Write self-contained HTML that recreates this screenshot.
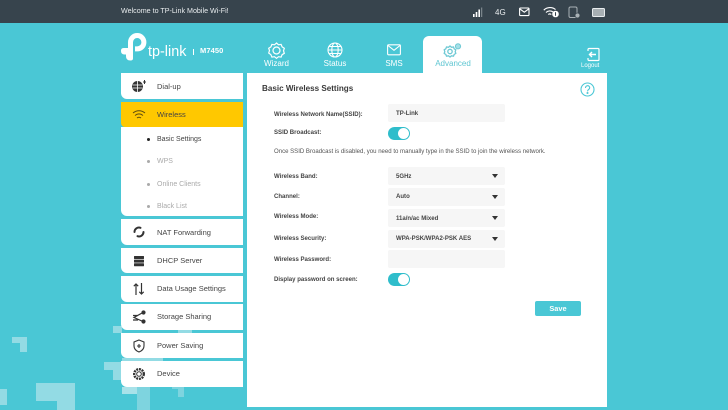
<!DOCTYPE html>
<html><head><meta charset="utf-8"><style>
*{box-sizing:border-box}
html,body{margin:0;padding:0}
body{width:728px;height:410px;overflow:hidden;background:#4AC7D5;position:relative;font-family:"Liberation Sans",sans-serif;color:#333}
.a{position:absolute}
.t{position:absolute;white-space:nowrap;line-height:12px}
.deco{position:absolute;background:#93DBE4}
.mi{position:absolute;left:121px;width:122px;background:#fff;border-radius:0 0 0 6px;font-size:7.5px;color:#444}
.mi span{position:absolute;left:36px;top:50%;margin-top:-6px;line-height:12px;white-space:nowrap}
.mi svg{position:absolute;left:10px;top:50%;margin-top:-7px}
.sub{position:absolute;font-size:7px;left:157px;line-height:10px;color:#aaa;white-space:nowrap}
.dot{position:absolute;left:146.5px;width:3px;height:3px;border-radius:50%;background:#aaa}
.l{position:absolute;left:274px;font-size:6.05px;font-weight:bold;color:#444;line-height:10px;white-space:nowrap}
.f{position:absolute;left:388px;width:117px;height:18px;background:#f6f6f6;border-radius:2px;font-size:6.05px;font-weight:bold;color:#444;line-height:19px;padding-left:8px}
.f i{position:absolute;right:7px;top:7px;width:0;height:0;border-left:3px solid transparent;border-right:3px solid transparent;border-top:4px solid #333}
.tog{position:absolute;left:388px;width:21.500px;height:13px;border-radius:6.500px;background:#2FBDCB}
.tog b{position:absolute;right:1px;top:1px;width:11px;height:11px;border-radius:50%;background:#fff}
.tab{position:absolute;top:58px;font-size:8px;color:#fff;line-height:12px;text-align:center;white-space:nowrap}
</style></head><body>
<div class="a" style="left:0;top:0;width:728px;height:23px;background:#37444D"></div>
<div class="t" style="left:121px;top:5px;font-size:7.15px;color:#e8ecee">Welcome to TP-Link Mobile Wi-Fi!</div>
<svg class="a" style="left:472px;top:7px" width="12" height="11" fill="#fff"><rect x="1" y="7" width="1.600" height="3"/><rect x="3.700" y="5" width="1.600" height="5"/><rect x="6.400" y="2.500" width="1.600" height="7.500"/><rect x="9.200" y=".5" width="1" height="9.500" fill="#8b959b"/></svg>
<div class="t" style="left:495px;top:6.500px;font-size:8px;color:#e8ecee">4G</div>
<svg class="a" style="left:519px;top:7px" width="11" height="10" fill="none" stroke="#fff" stroke-width="1.100"><rect x=".6" y="1" width="9.400" height="7.600" rx=".8"/><path d="M1 2l4.300 3.200L9.600 2"/></svg>
<svg class="a" style="left:543px;top:6px" width="17" height="12" fill="none" stroke="#fff" stroke-width="1.200"><path d="M.8 4.200C4 .8 9.500.8 12.500 3.600M3 6.500c2-2 5-2 7-.6M5.300 8.500c1-.8 2-.8 3 0"/><circle cx="12.500" cy="8" r="3.300" fill="#fff" stroke="none"/><rect x="12" y="6.200" width="1" height="3.600" fill="#37444D" stroke="none"/></svg>
<svg class="a" style="left:568px;top:6px" width="13" height="13" fill="none" stroke="#aab2b6" stroke-width="1"><rect x="1" y="1" width="8" height="10.500" rx="1.500"/><circle cx="9.500" cy="9.500" r="2.500" fill="#aab2b6" stroke="#37444D" stroke-width=".8"/></svg>
<svg class="a" style="left:592px;top:8px" width="13" height="9"><rect x=".5" y=".5" width="12" height="8" rx="1" fill="#a8b0b4" stroke="#e8ecee" stroke-width="1"/></svg>

<!-- logo -->
<svg class="a" style="left:120px;top:32px" width="28" height="30" fill="#fff"><path d="M10.500 16V10.200A6.700 6.700 0 1 1 17.200 16.900H15" fill="none" stroke="#fff" stroke-width="5"/><path d="M4 16H13V26.500Q13 28.500 10.500 28.500Q6 28.500 6 24V22.500H4.500Q1 22.500 1 19V18.500Q1 16 4 16Z"/></svg>
<div class="t" style="left:148px;top:44px;font-size:14.400px;color:#fff;line-height:16px">tp-link</div>
<div class="a" style="left:192.500px;top:49px;width:1px;height:6px;background:#fff"></div>
<div class="t" style="left:200px;top:45px;font-size:7.500px;font-weight:bold;color:#fff;letter-spacing:.1px">M7450</div>

<!-- nav -->
<svg class="a" style="left:268px;top:42px" width="17" height="17" fill="none" stroke="#fff" stroke-width="1.200"><path d="M8.500 1l2 1.800 2.600-.4 1 2.500 2.200 1.400-.8 2.500.8 2.500-2.200 1.400-1 2.400-2.600-.4-2 1.600-2-1.600-2.600.4-1-2.400L.7 11l.8-2.500L.7 6.300 2.900 4.900l1-2.500 2.600.4z"/><circle cx="8.500" cy="8.500" r="3.500"/></svg>
<div class="tab" style="left:264px;width:25px">Wizard</div>
<svg class="a" style="left:327px;top:42px" width="16" height="16" fill="none" stroke="#fff" stroke-width="1.100"><circle cx="8" cy="8" r="7"/><ellipse cx="8" cy="8" rx="3.200" ry="7"/><path d="M1 8h14M2 4.500h12M2 11.500h12"/></svg>
<div class="tab" style="left:323px;width:24px">Status</div>
<svg class="a" style="left:387px;top:44px" width="14" height="12" fill="none" stroke="#fff" stroke-width="1.100"><rect x=".6" y=".8" width="12.800" height="10" rx="1"/><path d="M1 1.500l6 4.800 6-4.800"/></svg>
<div class="tab" style="left:385px;width:18px">SMS</div>
<div class="a" style="left:423px;top:36px;width:59px;height:38px;background:#fff;border-radius:6px 6px 0 0"></div>
<svg class="a" style="left:443px;top:42px" width="19" height="16" fill="none" stroke="#6FC9D4" stroke-width="1.300"><path d="M7 4l1.500 1.300 2-.3.700 1.800 1.600 1-.6 1.800.6 1.800-1.600 1-.7 1.700-2-.3L7 15l-1.500-1.200-2 .3-.7-1.700-1.600-1 .6-1.800-.6-1.800 1.600-1 .7-1.800 2 .3z"/><circle cx="7" cy="9.500" r="2.200"/><circle cx="15" cy="4.300" r="2.600" fill="#A5E0E7" stroke-width="1"/></svg>
<div class="tab" style="left:434px;width:38px;color:#5FC6D2">Advanced</div>
<svg class="a" style="left:586px;top:47px" width="14" height="15" fill="none" stroke="#fff" stroke-width="1.200"><path d="M2 4V2.500a1 1 0 0 1 1-1h9a1 1 0 0 1 1 1v10a1 1 0 0 1-1 1H3a1 1 0 0 1-1-1V11"/><path d="M10 7.500H3.500M6 5L3.500 7.500 6 10" stroke-width="1.400"/></svg>
<div class="t" style="left:581px;top:62px;font-size:6px;color:#fff;line-height:9px">Logout</div>

<!-- deco -->
<div class="deco" style="left:12px;top:337px;width:15px;height:6px"></div><div class="deco" style="left:20px;top:337px;width:7px;height:15px"></div>
<div class="deco" style="left:36px;top:383px;width:39px;height:18px"></div><div class="deco" style="left:57px;top:383px;width:18px;height:27px"></div>
<div class="deco" style="left:0;top:389px;width:7px;height:16px"></div>
<div class="deco" style="left:104px;top:362px;width:17px;height:8px"></div><div class="deco" style="left:113px;top:362px;width:8px;height:18px"></div>
<div class="deco" style="left:113px;top:326px;width:9px;height:7px"></div>
<div class="deco" style="left:122px;top:358px;width:41px;height:4px"></div>
<div class="deco" style="left:178px;top:330px;width:14px;height:4px"></div>
<div class="deco" style="left:122px;top:387px;width:15px;height:7px;background:#A8E2E9"></div>
<div class="deco" style="left:137px;top:387px;width:13px;height:23px;background:#7ED4DF"></div>
<div class="deco" style="left:172px;top:387px;width:12px;height:2px;background:#7ED4DF"></div><div class="deco" style="left:178px;top:387px;width:6px;height:10px;background:#7ED4DF"></div>

<!-- sidebar -->
<div class="mi" style="top:73px;height:26px"><svg width="16" height="14" viewBox="0 0 16 14"><circle cx="6.500" cy="7.500" r="5.500" fill="#333"/><path d="M1.500 6h10M1.500 9h10M6.500 2v11" stroke="#fff" stroke-width=".8"/><path d="M12 3h3M13.500 1v4" stroke="#333" stroke-width="1"/></svg><span style="margin-top:-5px">Dial-up</span></div>
<div class="mi" style="top:102px;height:25px;background:#FFC800;border-radius:0 0 0 4px"><svg width="16" height="14" fill="none" stroke="#5a4a10" stroke-width="1"><path d="M2 5c3.500-3 8.500-3 12 0M4 7.500c2.500-2 5.500-2 8 0M6 10c1.300-1 2.700-1 4 0"/></svg><span>Wireless</span></div>
<div class="a" style="left:121px;top:127px;width:122px;height:89px;background:#fff;border-radius:0 0 0 6px"></div>
<div class="dot" style="top:138px;background:#222"></div><div class="sub" style="top:135px;color:#444">Basic Settings</div>
<div class="dot" style="top:160px"></div><div class="sub" style="top:157px">WPS</div>
<div class="dot" style="top:183px"></div><div class="sub" style="top:180px">Online Clients</div>
<div class="dot" style="top:205px"></div><div class="sub" style="top:202px">Black List</div>
<div class="mi" style="top:219px;height:26px"><svg width="16" height="14" fill="none" stroke="#333" stroke-width="2"><path d="M3.500 7a4.500 4.500 0 0 1 6-4.200M12.500 7a4.500 4.500 0 0 1-6 4.200" stroke-linecap="round"/></svg><span style="margin-top:-5px">NAT Forwarding</span></div>
<div class="mi" style="top:248px;height:25px"><svg width="16" height="14" fill="#333"><rect x="3" y="2" width="10" height="3" rx=".5"/><rect x="3" y="5.600" width="10" height="3" rx=".5"/><rect x="3" y="9.200" width="10" height="3" rx=".5"/></svg><span>DHCP Server</span></div>
<div class="mi" style="top:276px;height:26px"><svg width="16" height="14" fill="none" stroke="#333" stroke-width="1.200"><path d="M5 13V2M2.800 4.200L5 2l2.200 2.200M10.500 1v11M8.300 9.800l2.200 2.200 2.200-2.200"/></svg><span>Data Usage Settings</span></div>
<div class="mi" style="top:304px;height:26px"><svg width="16" height="14" fill="none" stroke="#333" stroke-width="1.200"><path d="M12 2.500L3 7.500l9 4M2 5.500h5M2 10h5"/><circle cx="12.500" cy="2.500" r="1.500" fill="#333"/><circle cx="12.500" cy="11.500" r="1.500" fill="#333"/></svg><span>Storage Sharing</span></div>
<div class="mi" style="top:333px;height:25px"><svg width="16" height="14" fill="none" stroke="#333" stroke-width="1.100"><path d="M8 1l5 2v4c0 3-2.500 5-5 6-2.500-1-5-3-5-6V3z"/><path d="M8 5v4M6 7h4"/></svg><span>Power Saving</span></div>
<div class="mi" style="top:361px;height:26px"><svg width="16" height="14" fill="none" stroke="#333" stroke-width="1.400"><circle cx="8" cy="7" r="4.800" stroke-dasharray="2 .8" stroke-width="2.400"/><circle cx="8" cy="7" r="2.300" stroke-width="1"/></svg><span>Device</span></div>

<!-- panel -->
<div class="a" style="left:247px;top:73px;width:360px;height:334px;background:#fff"></div>
<div class="t" style="left:262px;top:83px;font-size:8.100px;font-weight:bold;color:#3a3a3a">Basic Wireless Settings</div>
<svg class="a" style="left:580px;top:82px" width="15" height="15" fill="none" stroke="#4AC7D5" stroke-width="1.100"><circle cx="7.500" cy="7.500" r="6.500"/><path d="M5.500 6c0-3 4.200-3 4.200-.2 0 1.700-2.200 1.700-2.200 3.600"/><circle cx="7.500" cy="11" r=".5" fill="#4AC7D5"/></svg>

<div class="l" style="top:110px">Wireless Network Name(SSID):</div><div class="f" style="top:104px;line-height:20px">TP-Link</div>
<div class="l" style="top:128px">SSID Broadcast:</div><div class="tog" style="top:127px"><b></b></div>
<div class="t" style="left:274px;top:147px;font-size:6.050px;line-height:10px;color:#555">Once SSID Broadcast is disabled, you need to manually type in the SSID to join the wireless network.</div>
<div class="l" style="top:172px">Wireless Band:</div><div class="f" style="top:167px;line-height:20px">5GHz<i></i></div>
<div class="l" style="top:192px">Channel:</div><div class="f" style="top:188px">Auto<i></i></div>
<div class="l" style="top:212px">Wireless Mode:</div><div class="f" style="top:209px;line-height:20px">11a/n/ac Mixed<i></i></div>
<div class="l" style="top:234px">Wireless Security:</div><div class="f" style="top:230px">WPA-PSK/WPA2-PSK AES<i></i></div>
<div class="l" style="top:255px">Wireless Password:</div><div class="f" style="top:250px"></div>
<div class="l" style="top:275px">Display password on screen:</div><div class="tog" style="top:273px"><b></b></div>
<div class="a" style="left:535px;top:301px;width:46px;height:15px;background:#4AC7D5;border-radius:2px;color:#fff;font-size:7.400px;font-weight:bold;text-align:center;line-height:15px">Save</div>
</body></html>
